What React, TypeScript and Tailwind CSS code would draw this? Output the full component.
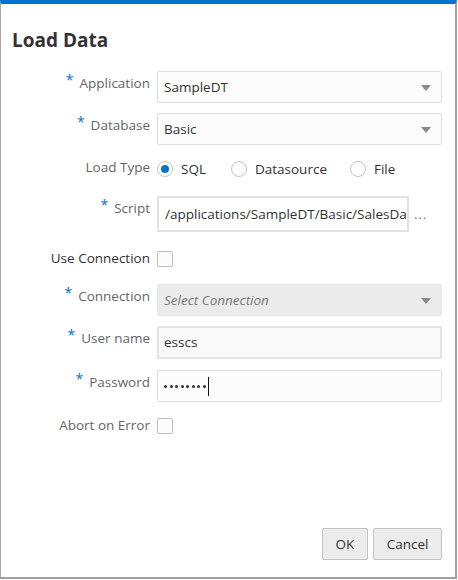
import React from 'react';

const font = { fontFamily: '"Open Sans", "Noto Sans", sans-serif' };

function Label({ text, required, dark }: { text: string; required?: boolean; dark?: boolean }) {
  return (
    <div className={`w-[156px] shrink-0 text-right pr-[7px] text-[13.5px] leading-[20px] ${dark ? 'text-[#333]' : 'text-[#666]'}`}>
      {required && <span className="text-[#0572ce] text-[14px] relative -top-[3px] mr-[6px]">*</span>}
      {text}
    </div>
  );
}

function Caret() {
  return (
    <svg width="10" height="6" viewBox="0 0 10 6" className="absolute right-[10px] top-[13px]">
      <path d="M0 0 L10 0 L5 6 Z" fill="#8a8a8a" />
    </svg>
  );
}

function Select({ value, disabled }: { value: string; disabled?: boolean }) {
  return (
    <div
      className={`relative w-[285px] h-[32px] rounded-[2px] border flex items-center px-[6px] text-[13.5px] ${
        disabled ? 'bg-[#ebebeb] border-[#e6e6e6] text-[#7a7a7a] italic' : 'bg-[#fcfcfc] border-[#dfdfdf] text-[#333]'
      }`}
    >
      {value}
      <Caret />
    </div>
  );
}

function Radio({ label, checked }: { label: string; checked?: boolean }) {
  return (
    <div className="flex items-center">
      <div className="w-[16px] h-[16px] rounded-full border border-[#c4c4c4] flex items-center justify-center bg-white">
        {checked && <div className="w-[8px] h-[8px] rounded-full bg-[#0572ce]" />}
      </div>
      <span className="ml-[8px] text-[13.5px] text-[#333]">{label}</span>
    </div>
  );
}

function Checkbox() {
  return <div className="w-[16px] h-[16px] rounded-[2px] border border-[#bdbdbd] bg-[#fcfcfc]" />;
}

export default function App() {
  return (
    <div className="w-[458px] h-[580px] bg-white" style={font}>
      <div className="w-[457px] h-[579px] border-t-4 border-t-[#0572ce] border-l border-l-[#a8a8a8] border-r-2 border-r-[#a0a0a0] border-b-2 border-b-[#a0a0a0] flex flex-col">
        <h1 className="pl-[11px] pt-[22px] text-[19px] font-bold text-[#333] leading-[28px]">Load Data</h1>

        <div className="flex flex-col mt-[17px]">
          {/* Application */}
          <div className="flex items-start">
            <div className="pt-[2px]"><Label text="Application" required /></div>
            <Select value="SampleDT" />
          </div>

          {/* Database */}
          <div className="flex items-start mt-[10px]">
            <div className="pt-[2px]"><Label text="Database" required /></div>
            <Select value="Basic" />
          </div>

          {/* Load Type */}
          <div className="flex items-center mt-[13px] h-[22px]">
            <div className="-mt-[5px]"><Label text="Load Type" /></div>
            <div className="flex items-center">
              <Radio label="SQL" checked />
              <div className="ml-[25px]"><Radio label="Datasource" /></div>
              <div className="ml-[23px]"><Radio label="File" /></div>
            </div>
          </div>

          {/* Script */}
          <div className="flex items-start mt-[16px]">
            <div className="pt-[2px]"><Label text="Script" required /></div>
            <div className="w-[252px] h-[36px] border-2 border-[#e2e2e2] bg-white flex items-center px-[6px] text-[13.5px] text-[#333] overflow-hidden whitespace-nowrap">
              /applications/SampleDT/Basic/SalesDa
            </div>
            <span className="ml-[5px] mt-[13px] text-[#777] text-[13px] tracking-[1px]">···</span>
          </div>

          {/* Use Connection */}
          <div className="flex items-start mt-[18px]">
            <div className="-mt-[2px]"><Label text="Use Connection" dark /></div>
            <div className="pt-[1px]"><Checkbox /></div>
          </div>

          {/* Connection */}
          <div className="flex items-start mt-[16px]">
            <div className="pt-[2px]"><Label text="Connection" required /></div>
            <Select value="Select Connection" disabled />
          </div>

          {/* User name */}
          <div className="flex items-start mt-[10px]">
            <div className="pt-[2px]"><Label text="User name" required /></div>
            <div className="w-[285px] h-[33px] rounded-[2px] border-2 border-[#e3e3e3] bg-[#fafafa] flex items-center px-[5px] text-[13.5px] text-[#333]">
              esscs
            </div>
          </div>

          {/* Password */}
          <div className="flex items-start mt-[11px]">
            <div className="pt-[2px]"><Label text="Password" required /></div>
            <div className="w-[285px] h-[32px] rounded-[2px] border border-[#dfdfdf] bg-[#fcfcfc] flex items-center px-[6px]">
              <div className="flex items-center gap-[2.5px] mt-[1px]">
                {Array.from({ length: 8 }).map((_, i) => (
                  <span key={i} className="w-[3px] h-[3px] rounded-full bg-[#333]" />
                ))}
              </div>
              <span className="ml-[2px] w-[1px] h-[19px] bg-[#111]" />
            </div>
          </div>

          {/* Abort on Error */}
          <div className="flex items-start mt-[16px]">
            <div className="-mt-[3px]"><Label text="Abort on Error" /></div>
            <div className="pt-[0px]"><Checkbox /></div>
          </div>
        </div>

        <div className="flex-1" />

        <div className="flex justify-end gap-[5px] pr-[13px] pb-[17px]">
          <button className="w-[46px] h-[32px] rounded-[2px] border border-[#c4c4c4] bg-[#ececec] text-[13.5px] text-[#333]">OK</button>
          <button className="w-[69px] h-[32px] rounded-[2px] border border-[#c4c4c4] bg-[#ececec] text-[13.5px] text-[#333]">Cancel</button>
        </div>
      </div>
    </div>
  );
}
